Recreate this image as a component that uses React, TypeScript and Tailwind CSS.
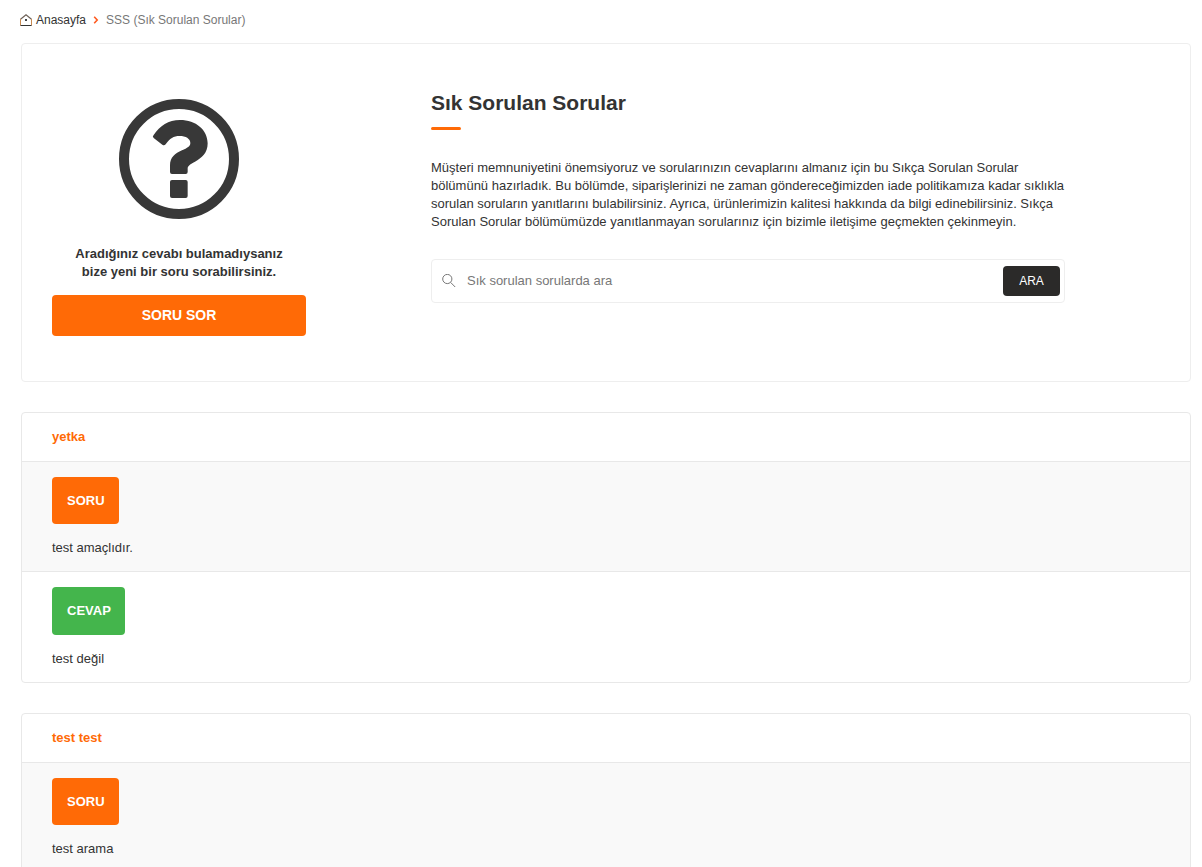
type FaqGroup = {
  title: string;
  question: string;
  answer?: string;
};

const groups: FaqGroup[] = [
  { title: "yetka", question: "test amaçlıdır.", answer: "test değil" },
  { title: "test test", question: "test arama" },
];

function HomeIcon() {
  return (
    <svg className="size-3" viewBox="0 0 12 12" fill="none" aria-hidden="true">
      <path d="M0.5 5.2 6 0.8l5.5 4.4" stroke="#6f6258" strokeWidth="1.2" />
      <path d="M0.5 5v6.5M11.5 5v6.5" stroke="#c98a50" />
      <path d="M0.5 11.5h11" stroke="#333" />
      <rect x="5" y="5" width="2" height="2" fill="#444" />
    </svg>
  );
}

function ChevronIcon() {
  return (
    <svg className="h-2 w-[6px]" viewBox="0 0 6 8" fill="none" aria-hidden="true">
      <path d="M1.2 0.8 4.2 4l-3 3.2" stroke="#ff5a1f" strokeWidth="1.6" />
    </svg>
  );
}

function QuestionIcon() {
  return (
    <svg className="size-[120px]" viewBox="57 57 360 360" fill="#383838" aria-hidden="true">
      <circle cx="237" cy="237" r="165" fill="none" stroke="#383838" strokeWidth="30" />
      <path d="M161 165C180 137 205 120 240 120C288 120 323 150 323 190C323 220 305 234 285 245C268 254 263 258 263 266V276Q263 282 257 282H216Q210 282 210 276V256C210 232 225 220 246 211C262 204 271 199 271 189C271 176 257 168 239 168C220 168 210 175 197 193Q192 198 187 194L161 174Q156 170 161 165Z" />
      <rect x="210" y="300" width="53" height="54" rx="6" />
    </svg>
  );
}

function SearchIcon() {
  return (
    <svg className="size-[14px] shrink-0" viewBox="0 0 14 14" fill="none" stroke="#777" aria-hidden="true">
      <circle cx="5.3" cy="5" r="4.6" />
      <path d="M8.6 8.4l4.6 4.6" />
    </svg>
  );
}

function Breadcrumb() {
  return (
    <nav aria-label="Breadcrumb" className="flex h-5 items-center gap-[7px] text-xs">
      <a href="#" className="flex items-center gap-1">
        <HomeIcon />
        Anasayfa
      </a>
      <ChevronIcon />
      <a href="#" className="text-[#777]">SSS (Sık Sorulan Sorular)</a>
    </nav>
  );
}

function Hero() {
  return (
    <section className="mt-[13px] flex gap-[125px] rounded border border-[#eee] pt-[55px] pr-[125px] pb-[45px] pl-[30px]">
      <div className="flex w-[254px] shrink-0 flex-col items-center">
        <QuestionIcon />
        <p className="mt-[26px] text-center text-[13px] leading-[18px] font-bold">
          Aradığınız cevabı bulamadıysanız
          <br />
          bize yeni bir soru sorabilirsiniz.
        </p>
        <button type="button" className="mt-[14px] h-[41px] w-full rounded bg-[#ff6a06] pb-[2px] text-sm font-bold text-white">
          SORU SOR
        </button>
      </div>
      <div className="-mt-2 min-w-0 flex-1">
        <h1 className="text-[21px] leading-6 font-bold">Sık Sorulan Sorular</h1>
        <div className="mt-3 h-[3px] w-[30px] rounded-sm bg-[#ff6a06]" />
        <p className="mt-[29px] text-[13px] leading-[18px]">
          Müşteri memnuniyetini önemsiyoruz ve sorularınızın cevaplarını almanız için bu Sıkça Sorulan Sorular
          bölümünü hazırladık. Bu bölümde, siparişlerinizi ne zaman göndereceğimizden iade politikamıza kadar sıklıkla
          sorulan soruların yanıtlarını bulabilirsiniz. Ayrıca, ürünlerimizin kalitesi hakkında da bilgi
          edinebilirsiniz. Sıkça Sorulan Sorular bölümümüzde yanıtlanmayan sorularınız için bizimle iletişime geçmekten
          çekinmeyin.
        </p>
        <form className="mt-7 flex h-11 items-center rounded border border-[#eee] pr-1 pl-[10px]">
          <SearchIcon />
          <input
            type="search"
            aria-label="Sık sorulan sorularda ara"
            placeholder="Sık sorulan sorularda ara"
            className="ml-[11px] min-w-0 flex-1 text-[13px] outline-none placeholder:text-[#777]"
          />
          <button type="button" className="h-[30px] w-[57px] rounded bg-[#2b2a29] text-xs text-white">
            ARA
          </button>
        </form>
      </div>
    </section>
  );
}

function FaqCard({ title, question, answer }: FaqGroup) {
  return (
    <section className="mt-[30px] overflow-hidden rounded border border-[#e8e8e8]">
      <h2 className="px-[30px] py-[15px] text-[13px] leading-[18px] font-bold text-[#ff6a06]">{title}</h2>
      <div className="border-t border-[#e8e8e8] bg-[#f9f9f9] px-[30px] pt-[15px] pb-[14px]">
        <span className="inline-flex h-[47px] items-center rounded bg-[#ff6a06] pr-[14px] pl-[15px] text-[13px] font-bold text-white">
          SORU
        </span>
        <p className="mt-[15px] text-[13px] leading-[18px]">{question}</p>
      </div>
      {answer && (
        <div className="border-t border-[#e8e8e8] px-[30px] pt-[15px] pb-[14px]">
          <span className="inline-flex h-12 items-center rounded bg-[#44b54c] pr-[14px] pl-[15px] text-[13px] font-bold text-white">
            CEVAP
          </span>
          <p className="mt-[15px] text-[13px] leading-[18px]">{answer}</p>
        </div>
      )}
    </section>
  );
}

export default function App() {
  return (
    <div className="min-h-screen bg-white font-['Liberation_Sans',Arial,sans-serif] text-[#333]">
      <main className="pt-[10px] pr-[11px] pl-5">
        <Breadcrumb />
        <div className="pl-px">
          <Hero />
          {groups.map((group) => (
            <FaqCard key={group.title} {...group} />
          ))}
        </div>
      </main>
    </div>
  );
}
